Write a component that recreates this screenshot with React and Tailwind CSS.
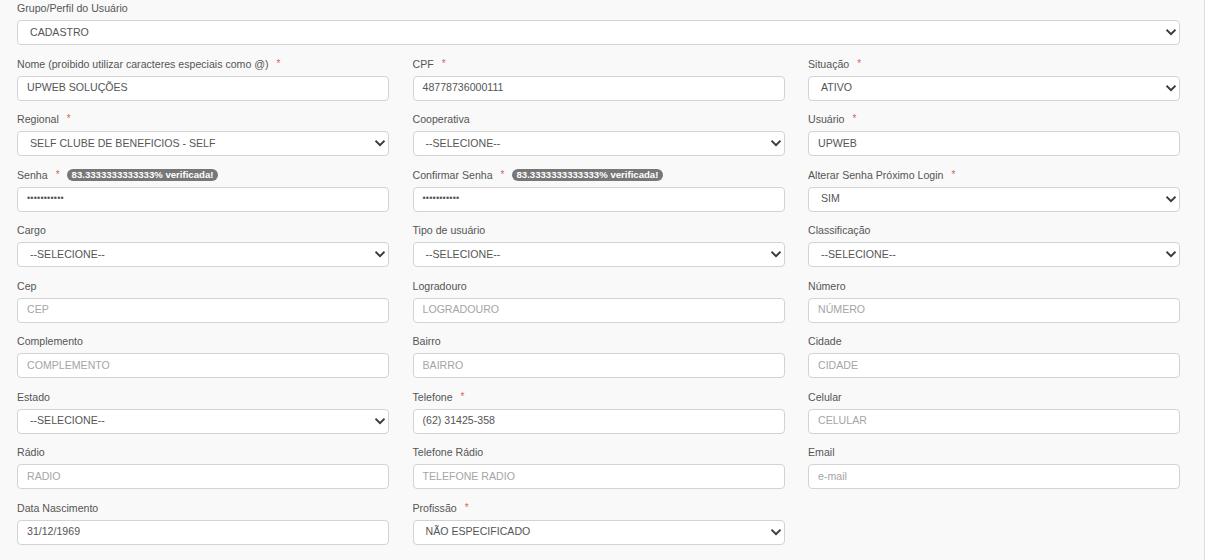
import React from "react";

const Chevron = () => (
  <svg width="10" height="7" viewBox="0 0 10 7" className="shrink-0">
    <path d="M1.2 1.4 L5 5.2 L8.8 1.4" fill="none" stroke="#3a3a3a" strokeWidth="2" strokeLinecap="square" />
  </svg>
);

const Badge = () => (
  <span className="ml-[7px] inline-flex h-[12px] items-center rounded-full bg-[#777777] px-[5px] text-[9.6px] font-bold leading-none text-white">
    83.3333333333333% verificada!
  </span>
);

const Label = ({ text, req, badge }) => (
  <div className="mb-[5px] flex h-[14px] items-center text-[10.6px] leading-[14px] text-[#555555]">
    <span>{text}</span>
    {req && <span className="ml-[8px] text-[10px] text-[#e0605a]">*</span>}
    {badge && <Badge />}
  </div>
);

const Input = ({ value, placeholder, password }) => (
  <div className="flex h-[25px] items-center rounded-[4px] border border-[#d3d3d3] bg-white px-[9px] text-[10.6px]">
    {value ? (
      <span className={password ? "text-[9px] tracking-[0.2px] text-[#555]" : "text-[#555]"}>{value}</span>
    ) : (
      <span className="text-[#a5a5a5]">{placeholder}</span>
    )}
  </div>
);

const Select = ({ value }) => (
  <div className="flex h-[25px] items-center justify-between rounded-[4px] border border-[#d3d3d3] bg-white pl-[12px] pr-[3px] text-[10.6px] text-[#555]">
    <span>{value}</span>
    <Chevron />
  </div>
);

const Field = ({ label, req, badge, kind = "input", value, placeholder, password }) => (
  <div>
    <Label text={label} req={req} badge={badge} />
    {kind === "select" ? (
      <Select value={value} />
    ) : (
      <Input value={value} placeholder={placeholder} password={password} />
    )}
  </div>
);

const rows = [
  [
    { label: "Nome (proibido utilizar caracteres especiais como @)", req: true, value: "UPWEB SOLUÇÕES" },
    { label: "CPF", req: true, value: "48778736000111" },
    { label: "Situação", req: true, kind: "select", value: "ATIVO" },
  ],
  [
    { label: "Regional", req: true, kind: "select", value: "SELF CLUBE DE BENEFICIOS - SELF" },
    { label: "Cooperativa", kind: "select", value: "--SELECIONE--" },
    { label: "Usuário", req: true, value: "UPWEB" },
  ],
  [
    { label: "Senha", req: true, badge: true, value: "•••••••••••", password: true },
    { label: "Confirmar Senha", req: true, badge: true, value: "•••••••••••", password: true },
    { label: "Alterar Senha Próximo Login", req: true, kind: "select", value: "SIM" },
  ],
  [
    { label: "Cargo", kind: "select", value: "--SELECIONE--" },
    { label: "Tipo de usuário", kind: "select", value: "--SELECIONE--" },
    { label: "Classificação", kind: "select", value: "--SELECIONE--" },
  ],
  [
    { label: "Cep", placeholder: "CEP" },
    { label: "Logradouro", placeholder: "LOGRADOURO" },
    { label: "Número", placeholder: "NÚMERO" },
  ],
  [
    { label: "Complemento", placeholder: "COMPLEMENTO" },
    { label: "Bairro", placeholder: "BAIRRO" },
    { label: "Cidade", placeholder: "CIDADE" },
  ],
  [
    { label: "Estado", kind: "select", value: "--SELECIONE--" },
    { label: "Telefone", req: true, value: "(62) 31425-358" },
    { label: "Celular", placeholder: "CELULAR" },
  ],
  [
    { label: "Rádio", placeholder: "RADIO" },
    { label: "Telefone Rádio", placeholder: "TELEFONE RADIO" },
    { label: "Email", placeholder: "e-mail" },
  ],
  [
    { label: "Data Nascimento", value: "31/12/1969" },
    { label: "Profissão", req: true, kind: "select", value: "NÃO ESPECIFICADO" },
    null,
  ],
];

export default function App() {
  return (
    <div className="flex h-[560px] w-[1210px] bg-white" style={{ fontFamily: '"Liberation Sans", Arial, sans-serif' }}>
      <div className="h-full w-[1205px] border-r border-[#dddddd] bg-[#f9f9f9] pl-[17px] pr-[24px] pt-[1px]">
        <div className="mb-[11.5px]">
          <Field label="Grupo/Perfil do Usuário" kind="select" value="CADASTRO" />
        </div>
        {rows.map((row, i) => (
          <div key={i} className="mb-[11.5px] grid grid-cols-3 gap-x-[23.5px]">
            {row.map((f, j) => (f ? <Field key={j} {...f} /> : <div key={j} />))}
          </div>
        ))}
      </div>
    </div>
  );
}
